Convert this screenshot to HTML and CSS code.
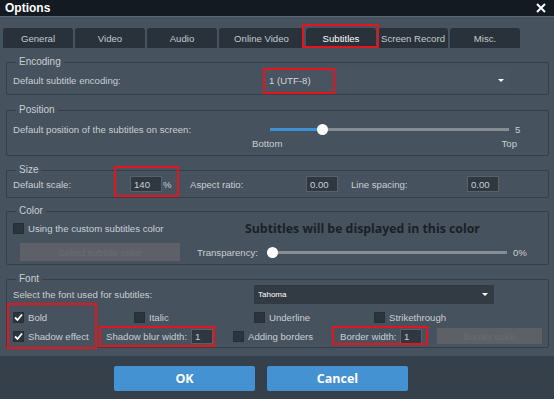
FILE: index.html
```html
<!DOCTYPE html>
<html lang="en">
<head>
    <meta charset="UTF-8">
    <title>Options</title>
    <link rel="stylesheet" href="styles.css">
</head>
<body>
    <div class="window">
        <div class="titlebar">
            <span class="title">Options</span>
            <svg class="close" width="10" height="10" viewBox="0 0 10 10"><path d="M1 1L9 9M9 1L1 9" stroke="#fff" stroke-width="2"/></svg>
        </div>

        <div class="tabs">
            <div class="tab">General</div>
            <div class="tab">Video</div>
            <div class="tab">Audio</div>
            <div class="tab wide">Online Video</div>
            <div class="tab active">Subtitles</div>
            <div class="tab">Screen Record</div>
            <div class="tab">Misc.</div>
        </div>

        <fieldset class="group g-encoding">
            <legend>Encoding</legend>
            <div class="row">
                <span class="label w-enc">Default subtitle encoding:</span>
                <div class="select enc">
                    <span>1 (UTF-8)</span>
                    <span class="arrow"></span>
                </div>
            </div>
        </fieldset>

        <fieldset class="group g-position">
            <legend>Position</legend>
            <div class="row r-pos">
                <span class="label w-pos">Default position of the subtitles on screen:</span>
                <div class="slider pos">
                    <div class="fill" style="width: 52px"></div>
                    <div class="thumb"></div>
                </div>
                <span class="value">5</span>
            </div>
            <div class="ends">
                <span>Bottom</span>
                <span>Top</span>
            </div>
        </fieldset>

        <fieldset class="group g-size">
            <legend>Size</legend>
            <div class="row">
                <span class="label w-scale">Default scale:</span>
                <span class="input i-num">140</span>
                <span class="label w-pct">%</span>
                <span class="label w-num">Aspect ratio:</span>
                <span class="input i-num">0.00</span>
                <span class="label w-gap"></span>
                <span class="label w-num">Line spacing:</span>
                <span class="input i-num">0.00</span>
            </div>
        </fieldset>

        <fieldset class="group g-color">
            <legend>Color</legend>
            <div class="row r-color1">
                <label class="check w-custom"><span class="box"></span>Using the custom subtitles color</label>
                <span class="preview">Subtitles will be displayed in this color</span>
            </div>
            <div class="row r-color2">
                <span class="disabled-btn pick">Select subtitle color</span>
                <span class="label w-trans">Transparency:</span>
                <div class="slider trans">
                    <div class="thumb"></div>
                </div>
                <span class="value">0%</span>
            </div>
        </fieldset>

        <fieldset class="group g-font">
            <legend>Font</legend>
            <div class="row r-font0">
                <span class="label w-fontsel">Select the font used for subtitles:</span>
                <div class="select fontsel">
                    <span>Tahoma</span>
                    <span class="arrow"></span>
                </div>
            </div>
            <div class="row r-font1">
                <label class="check w-c1"><span class="box on"><svg width="9" height="9" viewBox="0 0 9 9"><path d="M1 4.5L3.5 7L8 1.5" fill="none" stroke="#fff" stroke-width="1.8"/></svg></span>Bold</label>
                <label class="check w-c2"><span class="box"></span>Italic</label>
                <label class="check w-c2"><span class="box"></span>Underline</label>
                <label class="check"><span class="box"></span>Strikethrough</label>
            </div>
            <div class="row r-font2">
                <label class="check w-shadow"><span class="box on"><svg width="9" height="9" viewBox="0 0 9 9"><path d="M1 4.5L3.5 7L8 1.5" fill="none" stroke="#fff" stroke-width="1.8"/></svg></span>Shadow effect</label>
                <span class="label w-blur">Shadow blur width:</span>
                <span class="input i-small">1</span>
                <label class="check w-borders"><span class="box"></span>Adding borders</label>
                <span class="label w-bw">Border width:</span>
                <span class="input i-small">1</span>
                <span class="disabled-btn bcolor">Border color</span>
            </div>
        </fieldset>

        <div class="footer">
            <button class="btn">OK</button>
            <button class="btn">Cancel</button>
        </div>

        <!-- annotation boxes drawn over the dialog -->
        <div class="mark m-tab"></div>
        <div class="mark m-enc"></div>
        <div class="mark m-scale"></div>
        <div class="mark m-bold"></div>
        <div class="mark m-blur"></div>
        <div class="mark m-border"></div>
    </div>
</body>
</html>
```

FILE: styles.css
```css
body {
    margin: 0;
    background-color: #46525e;
    font-family: 'Liberation Sans', Arial, sans-serif;
    font-size: 9.6px;
    color: #c9ced3;
    overflow: hidden;
}

.window {
    position: relative;
    width: 554px;
    height: 399px;
    display: flex;
    flex-direction: column;
    background-color: #46525e;
}

.titlebar {
    height: 16px;
    background-color: #141a21;
    border-bottom: 1px solid #5d6772;
    display: flex;
    align-items: center;
    justify-content: space-between;
    padding: 0 8px 0 5px;
}

.title {
    color: #ffffff;
    font-weight: bold;
    font-size: 12px;
}

.close {
    margin-top: -1px;
}

.tabs {
    display: flex;
    gap: 2px;
    margin-top: 11px;
    padding-left: 3px;
    height: 20px;
}

.tab {
    width: 70px;
    background-color: #29323b;
    border-radius: 3px 3px 0 0;
    display: flex;
    align-items: center;
    justify-content: center;
    color: #c3c9cf;
}

.tab.wide {
    width: 85px;
}

.tab.active {
    color: #ffffff;
}

/* group boxes */
.group {
    margin: 0 5px 0 6px;
    padding: 0 6px;
    border: 1px solid #363f49;
    border-radius: 2px;
    min-width: 0;
}

.group legend {
    padding: 0 3px;
    margin-left: 3px;
    line-height: 12px;
    font-size: 10px;
    color: #c9ced3;
}

.g-encoding {
    margin-top: 8px;
    padding-top: 1px;
    padding-bottom: 3px;
}

.g-position {
    margin-top: 9px;
    padding-top: 6px;
    padding-bottom: 5px;
}

.g-size {
    margin-top: 8px;
    padding-top: 0;
    padding-bottom: 5px;
}

.g-color {
    margin-top: 7px;
    padding-top: 2px;
    padding-bottom: 3px;
}

.g-font {
    margin-top: 8px;
    padding-top: 0;
    padding-bottom: 1px;
}

.row {
    display: flex;
    align-items: center;
}

.label {
    flex-shrink: 0;
    white-space: nowrap;
}

.w-enc { width: 252px; }
.w-pos { width: 257px; }
.w-scale { width: 117px; }
.w-pct { width: 27px; padding-left: 1px; }
.w-num { width: 116px; }
.w-gap { width: 13px; }
.w-trans { width: 70px; }
.w-fontsel { width: 241px; }
.w-blur { width: 85px; }
.w-bw { width: 60px; }

.select {
    height: 22px;
    display: flex;
    align-items: center;
    justify-content: space-between;
    box-sizing: border-box;
}

.select.enc {
    width: 245px;
    padding: 0 6px 0 4px;
    background-color: #48545f;
    color: #d3d7db;
}

.select.fontsel {
    width: 240px;
    height: 19px;
    padding: 0 6px 0 4px;
    background-color: #323b44;
    color: #ffffff;
    font-size: 8px;
}

.arrow {
    width: 0;
    height: 0;
    border-left: 3px solid transparent;
    border-right: 3px solid transparent;
    border-top: 3px solid #ffffff;
}

/* sliders */
.r-pos {
    height: 14px;
}

.slider {
    position: relative;
    height: 3px;
    background-color: #868d94;
}

.slider.pos {
    width: 239px;
}

.slider .fill {
    height: 100%;
    background-color: #3d8fd6;
}

.slider .thumb {
    position: absolute;
    top: -4px;
    width: 11px;
    height: 11px;
    border-radius: 50%;
    background-color: #ffffff;
}

.slider.pos .thumb {
    left: 47px;
}

.slider.trans {
    width: 240px;
}

.slider.trans .thumb {
    left: 0;
}

.value {
    margin-left: 6px;
}

.ends {
    display: flex;
    justify-content: space-between;
    margin: 1px 0 0 239px;
    width: 265px;
    height: 13px;
    line-height: 13px;
}

/* inputs */
.input {
    box-sizing: border-box;
    height: 16px;
    background-color: #2f3841;
    border: 1px solid #56616b;
    color: #c9ced3;
    display: flex;
    align-items: center;
    padding-left: 3px;
    flex-shrink: 0;
}

.i-num {
    width: 32px;
}

.i-small {
    width: 22px;
    height: 15px;
}

/* checkboxes */
.check {
    display: flex;
    align-items: center;
    gap: 4px;
    white-space: nowrap;
    flex-shrink: 0;
}

.box {
    width: 11px;
    height: 11px;
    box-sizing: border-box;
    background-color: #2c353e;
    border: 1px solid #262e36;
    display: flex;
    align-items: center;
    justify-content: center;
}

.w-custom { width: 232px; }
.w-c1 { width: 121px; }
.w-c2 { width: 120px; }
.w-shadow { width: 93px; }
.w-borders { width: 107px; margin-left: 20px; }

.preview {
    font-family: 'Open Sans', sans-serif;
    font-weight: bold;
    font-size: 12.3px;
    color: #1b2026;
    white-space: nowrap;
}

.r-color1 {
    height: 18px;
}

.r-color2 {
    margin-top: 6px;
    height: 18px;
}

.disabled-btn {
    box-sizing: border-box;
    background-color: #5d6167;
    color: #686c71;
    display: flex;
    align-items: center;
    justify-content: center;
    flex-shrink: 0;
}

.pick {
    width: 160px;
    height: 18px;
    margin: 0 17px 0 7px;
}

.bcolor {
    width: 105px;
    height: 16px;
    margin-left: 15px;
}

.r-font0 {
    height: 19px;
}

.r-font1 {
    margin-top: 4px;
    height: 18px;
}

.r-font2 {
    height: 20px;
}

/* footer */
.footer {
    margin-top: auto;
    height: 43px;
    background-color: #36404b;
    display: flex;
    gap: 12px;
    padding: 10px 0 0 114px;
    box-sizing: border-box;
}

.btn {
    width: 141px;
    height: 25px;
    border: none;
    border-radius: 2px;
    background-color: #4592d2;
    color: #ffffff;
    font-family: 'Open Sans', sans-serif;
    font-weight: bold;
    font-size: 12.5px;
    cursor: pointer;
}

/* red annotation boxes */
.mark {
    position: absolute;
    border: 2px solid #e5141d;
    box-sizing: border-box;
}

.m-tab { left: 302px; top: 24px; width: 77px; height: 24px; }
.m-enc { left: 263px; top: 68px; width: 72px; height: 26px; }
.m-scale { left: 114px; top: 166px; width: 65px; height: 31px; }
.m-bold { left: 7px; top: 303px; width: 90px; height: 46px; }
.m-blur { left: 99px; top: 326px; width: 116px; height: 21px; }
.m-border { left: 332px; top: 326px; width: 96px; height: 19px; }
```
